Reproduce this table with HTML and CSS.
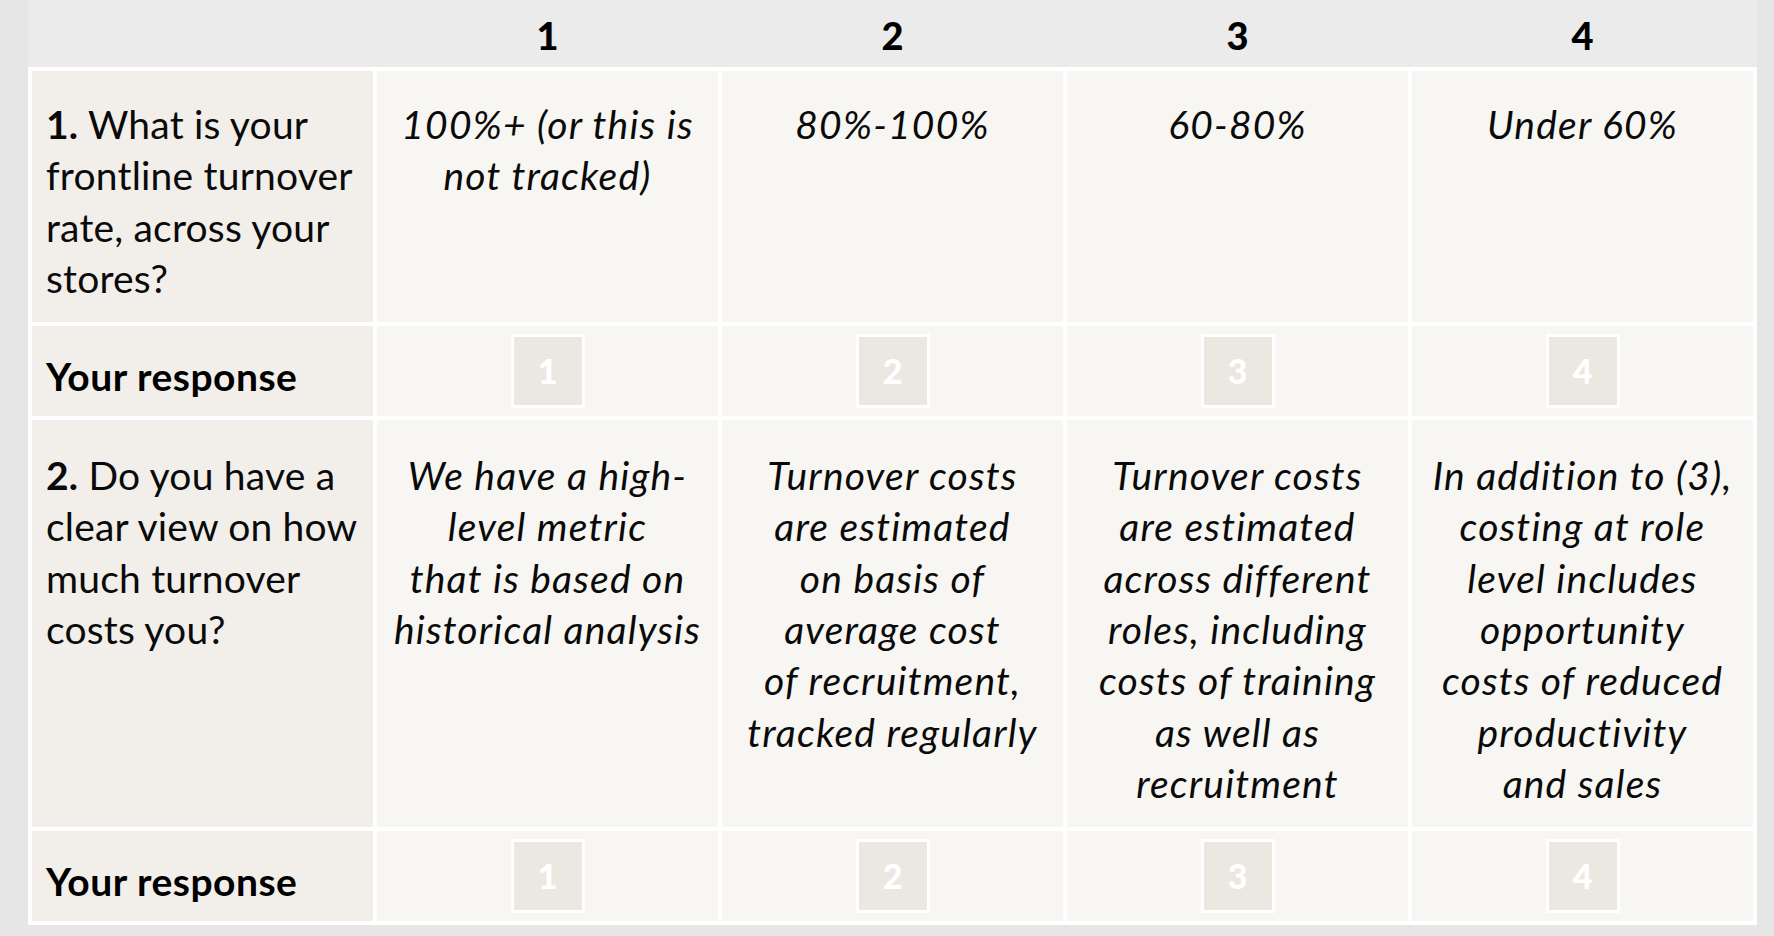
FILE: index.html
```html
<!DOCTYPE html>
<html lang="en">
<head>
<meta charset="utf-8">
<title>Turnover assessment</title>
<link rel="stylesheet" href="styles.css">
</head>
<body>
<div class="page">
  <div class="head">
    <div class="num"></div>
    <div class="num">1</div>
    <div class="num">2</div>
    <div class="num">3</div>
    <div class="num">4</div>
  </div>
  <div class="grid">
    <div class="q"><b>1.</b> What is your<br>frontline turnover<br>rate, across your<br>stores?</div>
    <div class="opt">100%+ (or this is<br>not tracked)</div>
    <div class="opt">80%-100%</div>
    <div class="opt">60-80%</div>
    <div class="opt">Under 60%</div>

    <div class="lab">Your response</div>
    <div class="resp"><div class="box">1</div></div>
    <div class="resp"><div class="box">2</div></div>
    <div class="resp"><div class="box">3</div></div>
    <div class="resp"><div class="box">4</div></div>

    <div class="q tall"><b>2.</b> Do you have a<br>clear view on how<br>much turnover<br>costs you?</div>
    <div class="opt tall">We have a high-<br>level metric<br>that is based on<br>historical analysis</div>
    <div class="opt tall">Turnover costs<br>are estimated<br>on basis of<br>average cost<br>of recruitment,<br>tracked regularly</div>
    <div class="opt tall">Turnover costs<br>are estimated<br>across different<br>roles, including<br>costs of training<br>as well as<br>recruitment</div>
    <div class="opt tall">In addition to (3),<br>costing at role<br>level includes<br>opportunity<br>costs of reduced<br>productivity<br>and sales</div>

    <div class="lab">Your response</div>
    <div class="resp"><div class="box">1</div></div>
    <div class="resp"><div class="box">2</div></div>
    <div class="resp"><div class="box">3</div></div>
    <div class="resp"><div class="box">4</div></div>
  </div>
</div>
</body>
</html>
```

FILE: styles.css
```css
html, body {
  margin: 0;
  padding: 0;
}

body {
  background: #e6e6e6;
  font-family: Lato, "Open Sans", "Liberation Sans", sans-serif;
  color: #0a0a0a;
}

.page {
  margin: 0 17px 0 28px;
}

.head {
  display: grid;
  grid-template-columns: repeat(5, 1fr);
  column-gap: 4px;
  padding: 5px 4px 0;
  height: 67px;
  box-sizing: border-box;
  background: #ebebeb;
}

.num {
  text-align: center;
  font-weight: 900;
  font-size: 38px;
  line-height: 60px;
  color: #000;
}

.grid {
  display: grid;
  grid-template-columns: repeat(5, 1fr);
  gap: 4px;
  padding: 4px;
  background: #ffffff;
}

.q {
  background: #f2efea;
  padding: 28px 10px 18px 14px;
  font-size: 39px;
  line-height: 51.3px;
  letter-spacing: 0.2px;
  white-space: nowrap;
}

.q b {
  font-weight: 700;
}

.opt {
  background: #f7f6f2;
  padding: 28px 4px 18px;
  font-size: 39px;
  line-height: 51.3px;
  font-style: italic;
  letter-spacing: 1.2px;
  text-align: center;
  white-space: nowrap;
}

.tall {
  padding-top: 30px;
  padding-bottom: 18px;
}

.lab {
  background: #f2efea;
  height: 90px;
  box-sizing: border-box;
  padding: 9px 0 0 14px;
  display: flex;
  align-items: center;
  font-weight: 700;
  font-size: 39px;
  letter-spacing: 0.5px;
  color: #000;
}

.resp {
  background: #f7f6f2;
  height: 90px;
  display: flex;
  align-items: center;
  justify-content: center;
}

.box {
  width: 68px;
  height: 68px;
  box-sizing: content-box;
  border: 3px solid #ffffff;
  background: #ebe8e2;
  color: #ffffff;
  font-weight: 900;
  font-size: 34px;
  display: flex;
  align-items: center;
  justify-content: center;
  line-height: 62px;
}
```
